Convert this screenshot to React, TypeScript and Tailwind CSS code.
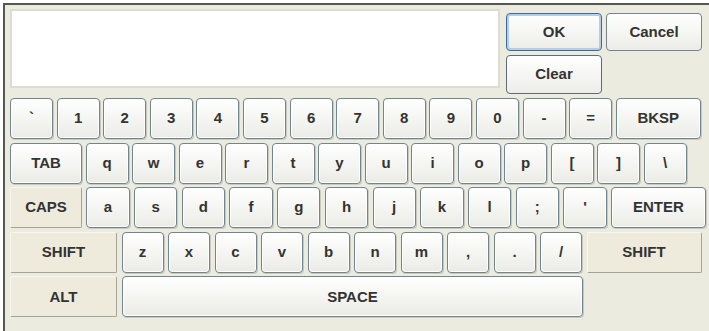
import React from 'react';

type KeyDef = { label: string; w: number; kind?: 'mod' | 'normal' };

const key = 'flex items-center justify-center rounded-[4px] border border-[#72858e] bg-gradient-to-b from-[#ffffff] to-[#ebebe6] shadow-[inset_0_0_0_1px_#ffffff,1px_1px_0_#c9c9bf] text-[15px] font-bold text-[#333333] shrink-0';
const mod = 'flex items-center justify-center rounded-[2px] border border-t-[#f8f6ee] border-l-[#f8f6ee] border-r-[#a4a398] border-b-[#a4a398] bg-[#eeeadc] text-[15px] font-bold text-[#333333] shrink-0';

const rows: { gap: number; keys: KeyDef[] }[] = [
  {
    gap: 3.6,
    keys: [
      ...['`', '1', '2', '3', '4', '5', '6', '7', '8', '9', '0', '-', '='].map((l) => ({ label: l, w: 43 })),
      { label: 'BKSP', w: 85 },
    ],
  },
  {
    gap: 3.5,
    keys: [
      { label: 'TAB', w: 72 },
      ...['q', 'w', 'e', 'r', 't', 'y', 'u', 'i', 'o', 'p', '[', ']', '\\'].map((l) => ({ label: l, w: 43 })),
    ],
  },
  {
    gap: 4.4,
    keys: [
      { label: 'CAPS', w: 72, kind: 'mod' as const },
      ...['a', 's', 'd', 'f', 'g', 'h', 'j', 'k', 'l', ';', "'"].map((l) => ({ label: l, w: 43.3 })),
      { label: 'ENTER', w: 95 },
    ],
  },
  {
    gap: 4.5,
    keys: [
      { label: 'SHIFT', w: 107, kind: 'mod' as const },
      ...['z', 'x', 'c', 'v', 'b', 'n', 'm', ',', '.', '/'].map((l) => ({ label: l, w: 42 })),
      { label: 'SHIFT', w: 115, kind: 'mod' as const },
    ],
  },
  {
    gap: 5,
    keys: [
      { label: 'ALT', w: 107, kind: 'mod' as const },
      { label: 'SPACE', w: 461 },
    ],
  },
];

export default function App() {
  return (
    <div className="w-[709px] h-[331px] bg-white overflow-hidden" style={{ fontFamily: '"Liberation Sans", Arial, sans-serif' }}>
      <div className="ml-[3px] mt-[3px] h-[328px] border-t-2 border-l-2 border-[#55584f] bg-[#ecebdf] pl-[5px] pt-[4px]">
        {/* input + buttons */}
        <div className="flex h-[85px]">
          <div className="w-[490px] h-[79px] border-2 border-[#dedbd0] bg-white" />
          <div className="ml-[6px] mt-[4px] grid grid-cols-[96px_96px] grid-rows-[38px_39px] gap-[4px]">
            <button className="flex items-center justify-center rounded-[4px] border border-[#3f6a9a] bg-gradient-to-b from-[#ffffff] to-[#ecece8] shadow-[inset_0_0_0_2px_#b7cde6] text-[15px] font-bold text-[#333]">
              OK
            </button>
            <button className="flex items-center justify-center rounded-[4px] border border-[#72858e] bg-gradient-to-b from-[#ffffff] to-[#ecece8] text-[15px] font-bold text-[#333]">
              Cancel
            </button>
            <button className="flex items-center justify-center rounded-[4px] border border-[#5c6d76] bg-gradient-to-b from-[#ffffff] to-[#ecece8] text-[15px] font-bold text-[#333]">
              Clear
            </button>
          </div>
        </div>

        {/* keyboard */}
        <div className="mt-[4px] flex flex-col gap-[3.6px]">
          {rows.map((row, i) => (
            <div key={i} className="flex h-[41px]" style={{ gap: row.gap }}>
              {row.keys.map((k, j) => (
                <div key={j} className={k.kind === 'mod' ? mod : key} style={{ width: k.w }}>
                  {k.label}
                </div>
              ))}
            </div>
          ))}
        </div>
      </div>
    </div>
  );
}
